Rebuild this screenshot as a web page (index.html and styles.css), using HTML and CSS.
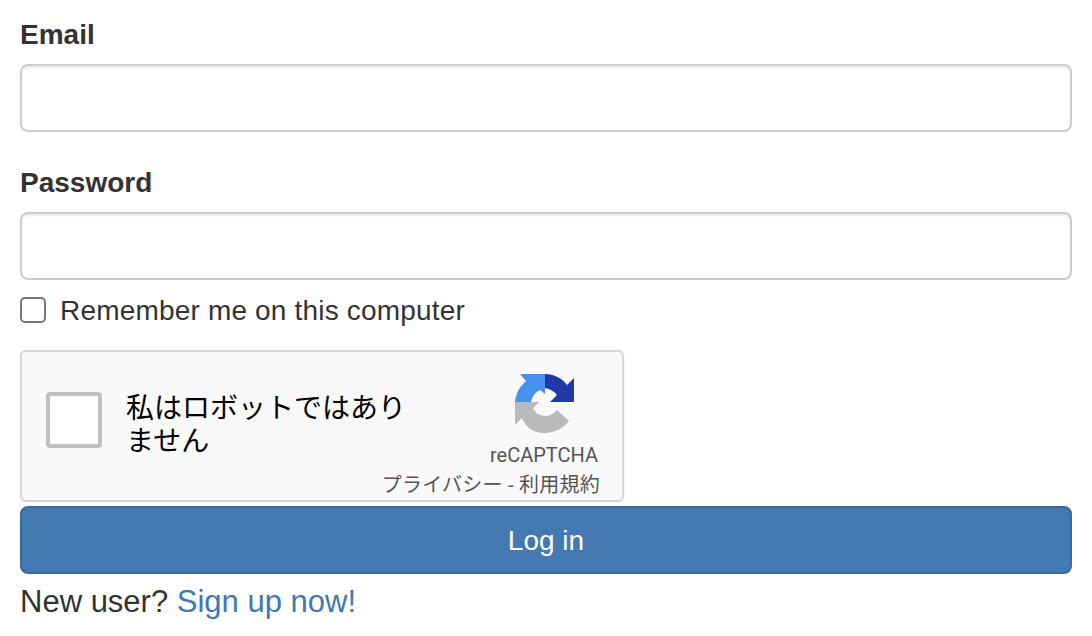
FILE: index.html
```html
<!DOCTYPE html>
<html lang="en">
<head>
    <meta charset="UTF-8">
    <meta name="viewport" content="width=device-width, initial-scale=1.0">
    <title>Log in</title>
    <link rel="stylesheet" href="styles.css">
</head>
<body>
    <form class="login-form">
        <div class="form-group">
            <label class="field-label" for="email">Email</label>
            <input class="field-input" type="email" id="email">
        </div>
        <div class="form-group form-group-last">
            <label class="field-label" for="password">Password</label>
            <input class="field-input" type="password" id="password">
        </div>
        <label class="remember">
            <input class="remember-box" type="checkbox">
            <span class="remember-text">Remember me on this computer</span>
        </label>

        <div class="captcha">
            <div class="captcha-box"></div>
            <div class="captcha-text" lang="ja">私はロボットではありません</div>
            <div class="captcha-brand">
                <svg class="captcha-logo" width="60" height="62" viewBox="0 0 60 62">
                    <path fill="#4a90f0" d="M0 30C1 21 5 14 11 9L5 2H30V22L25 18C20 20 17 25 16 30Z"/>
                    <path fill="#1f3aa6" d="M30 2C39 2 47 6 52 13L59 6V30H35L42 23C39 19 35 17 30 16Z"/>
                    <path fill="#bababa" d="M0 30H24L18 36C20 41 25 44 30 44C35 44 38 42 42 38L54 49C48 57 39 61 29 61C19 61 11 56 7 46L0 53Z"/>
                </svg>
                <div class="captcha-name">reCAPTCHA</div>
                <div class="captcha-links" lang="ja">プライバシー - 利用規約</div>
            </div>
        </div>

        <button class="login-button" type="submit">Log in</button>
        <p class="signup">New user? <a href="#">Sign up now!</a></p>
    </form>
</body>
</html>
```

FILE: styles.css
```css
body {
    margin: 0;
    background-color: #fff;
    color: #333;
    font-family: "Liberation Sans", Arial, sans-serif;
    font-size: 28px;
    line-height: 40px;
}
.login-form {
    padding: 14px 20px 0;
}
.form-group {
    margin-bottom: 30px;
}
.form-group-last {
    margin-bottom: 10px;
}
.field-label {
    display: block;
    padding-top: 1px;
    margin-bottom: 9px;
    font-weight: bold;
}
.field-input {
    display: block;
    box-sizing: border-box;
    width: 100%;
    height: 68px;
    border: 2px solid #ccc;
    border-radius: 8px;
    box-shadow: inset 0 2px 2px rgba(0, 0, 0, 0.075);
    background-color: #fff;
}
.remember {
    display: flex;
    align-items: center;
    gap: 14px;
    height: 40px;
}
.remember-box {
    appearance: none;
    box-sizing: border-box;
    width: 26px;
    height: 26px;
    margin: 0;
    border: 2px solid #767676;
    border-radius: 5px;
    background-color: #fff;
}
.remember-text {
    padding-top: 2px;
    letter-spacing: 0.18px;
}
.captcha {
    display: flex;
    box-sizing: border-box;
    width: 604px;
    height: 152px;
    margin-top: 20px;
    border: 2px solid #d6d6d6;
    border-radius: 6px;
    background-color: #f9f9f9;
    box-shadow: 0 0 2px rgba(0, 0, 0, 0.08);
    font-family: Roboto, "Noto Sans CJK JP", sans-serif;
    color: #000;
}
.captcha-box {
    box-sizing: border-box;
    flex: none;
    width: 56px;
    height: 56px;
    margin: 40px 24px 0 24px;
    border: 4px solid #c1c1c1;
    border-radius: 4px;
    background-color: #fff;
}
.captcha-text {
    width: 290px;
    margin-top: 40px;
    font-size: 28px;
    line-height: 33px;
}
.captcha-brand {
    flex: 1;
    position: relative;
    color: #555;
    font-size: 20px;
    line-height: 28px;
    text-align: right;
}
.captcha-logo {
    display: block;
    margin: 20px 47px 0 auto;
}
.captcha-name {
    margin: 7px 24px 0 0;
}
.captcha-links {
    position: absolute;
    right: 22px;
    bottom: 1px;
    white-space: nowrap;
    letter-spacing: 0.25px;
}
.login-button {
    display: block;
    box-sizing: border-box;
    width: 100%;
    height: 68px;
    margin-top: 4px;
    padding-top: 3px;
    border: 2px solid #3a6a9e;
    border-radius: 8px;
    background-color: #4479b1;
    color: #fff;
    font-family: inherit;
    font-size: 28px;
}
.signup {
    margin: 8px 0 0;
    font-size: 31px;
}
.signup a {
    color: #3f78b3;
    text-decoration: none;
}
```
